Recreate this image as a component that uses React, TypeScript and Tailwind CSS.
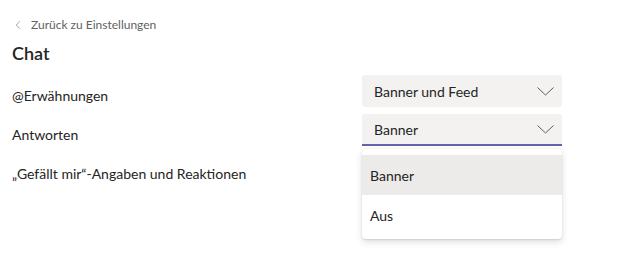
import { ChevronLeft } from "lucide-react";

const font = "font-['Segoe_UI','Lato','Liberation_Sans',sans-serif]";

function Chevron() {
  return (
    <svg width="17" height="9" viewBox="0 0 17 9" fill="none" className="text-[#605e5c]">
      <path d="M0.5 0.5 L8.5 8 L16.5 0.5" stroke="currentColor" strokeWidth="1" />
    </svg>
  );
}

function Select({ value, active }: { value: string; active?: boolean }) {
  return (
    <div
      className={`w-[200px] h-[32px] bg-[#f3f2f1] rounded-[3px] flex items-center justify-between pl-[12px] pr-[8px] text-[14px] text-[#252423] ${
        active ? "border-b-2 border-[#6264a7] rounded-b-none" : ""
      }`}
    >
      <span>{value}</span>
      <Chevron />
    </div>
  );
}

export default function App() {
  return (
    <div className={`w-[635px] h-[272px] bg-white pl-[12px] ${font} text-[#252423]`}>
      <div className="pt-[17px] flex items-center gap-[6px] text-[12px] leading-[16px] text-[#616161]">
        <ChevronLeft size={14} strokeWidth={1} className="-ml-[1px]" />
        <span>Zurück zu Einstellungen</span>
      </div>
      <h1 className="mt-[8px] text-[18px] leading-[24px] font-semibold">Chat</h1>

      <div className="mt-[10px] flex flex-col gap-[7px]">
        <div className="flex">
          <div className="w-[350px] pt-[11px] text-[14px] leading-[20px]">@Erwähnungen</div>
          <Select value="Banner und Feed" />
        </div>
        <div className="flex">
          <div className="w-[350px] pt-[11px] text-[14px] leading-[20px]">Antworten</div>
          <div className="relative">
            <Select value="Banner" active />
            <div className="absolute left-0 top-[35px] w-[200px] bg-white rounded-[4px] pt-[6px] pb-[4px] shadow-[0_3px_7px_rgba(0,0,0,0.13),0_0.6px_1.8px_rgba(0,0,0,0.11)] z-10 text-[14px]">
              <div className="h-[40px] flex items-center pl-[8px] bg-[#edebe9]">Banner</div>
              <div className="h-[40px] flex items-center pl-[8px]">Aus</div>
            </div>
          </div>
        </div>
        <div className="flex">
          <div className="w-[350px] pt-[11px] text-[14px] leading-[20px]">„Gefällt mir“-Angaben und Reaktionen</div>
        </div>
      </div>
    </div>
  );
}
